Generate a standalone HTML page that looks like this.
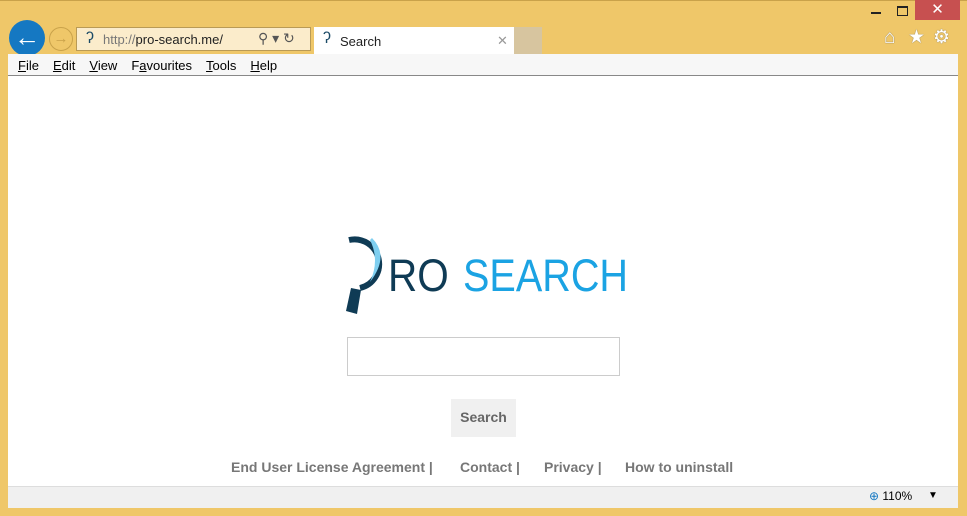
<!DOCTYPE html>
<html><head><style>
body{margin:0;width:967px;height:516px;background:#efc769;position:relative;overflow:hidden;font-family:"Liberation Sans",sans-serif}
.a{position:absolute}
.menu span{margin-right:14px}
.menu u{text-decoration:underline}
.lk{position:absolute;top:459px;font-size:14px;font-weight:bold;color:#777;white-space:pre}
</style></head><body>
<div class="a" style="left:0;top:0;width:967px;height:1px;background:#c9a24a"></div>
<div class="a" style="left:871px;top:12px;width:10px;height:2px;background:#222"></div>
<div class="a" style="left:897px;top:6px;width:9px;height:7px;border:1px solid #222;border-top-width:2px"></div>
<div class="a" style="left:915px;top:0;width:45px;height:20px;background:#c75050;color:#fff;font-size:15px;text-align:center;line-height:20px">✕</div>
<div class="a" style="left:884px;top:27px;font-size:19px;color:#fff;text-shadow:0 0 1px #555">⌂</div>
<div class="a" style="left:908px;top:26px;font-size:19px;color:#fff;text-shadow:0 0 1px #555">★</div>
<div class="a" style="left:933px;top:26px;font-size:19px;color:#fff;text-shadow:0 0 1px #555">⚙</div>
<div class="a" style="left:9px;top:20px;width:36px;height:36px;border-radius:50%;background:#1578c2;color:#fff;font-size:26px;font-weight:bold;text-align:center;line-height:34px">←</div>
<div class="a" style="left:49px;top:27px;width:22px;height:22px;border-radius:50%;border:1px solid #c9a24a;color:#c9a24a;font-size:15px;text-align:center;line-height:22px">→</div>
<div class="a" style="left:76px;top:27px;width:233px;height:22px;background:#fbeccb;border:1px solid #b99a55"></div>
<div class="a" style="left:86px;top:30px;font-size:16px;color:#1b4a66">ʔ</div>
<div class="a" style="left:103px;top:32px;font-size:13px;color:#777">http://<span style="color:#222">pro-search.me/</span></div>
<div class="a" style="left:258px;top:30px;font-size:14px;color:#555">⚲ ▾ ↻</div>
<div class="a" style="left:314px;top:27px;width:200px;height:27px;background:#fff"></div>
<div class="a" style="left:514px;top:27px;width:28px;height:27px;background:#d7c59f"></div>
<div class="a" style="left:323px;top:30px;font-size:16px;color:#1b4a66">ʔ</div>
<div class="a" style="left:340px;top:34px;font-size:13px;color:#222">Search</div>
<div class="a" style="left:497px;top:33px;font-size:13px;color:#999">✕</div>
<div class="a" style="left:8px;top:54px;width:950px;height:432px;background:#fff"></div>
<div class="a menu" style="left:8px;top:54px;width:950px;height:22px;background:#f7f7f7;border-bottom:1px solid #888;font-size:13px;color:#000;line-height:23px;padding-left:10px;box-sizing:border-box"><span><u>F</u>ile</span><span><u>E</u>dit</span><span><u>V</u>iew</span><span>F<u>a</u>vourites</span><span><u>T</u>ools</span><span><u>H</u>elp</span></div>
<svg class="a" style="left:340px;top:226px" width="60" height="92">
<path d="M9 14 A24 24 0 1 1 20 62" fill="none" stroke="#0f3b55" stroke-width="6"/>
<path d="M32 12 Q50 30 30 56 Q40 34 30 14 Z" fill="#7fcff0"/>
<path d="M11 62 L21 64 L17 88 L6 85 Z" fill="#0f3b55"/>
</svg>
<div class="a" style="left:388px;top:250px;font-size:45px;color:#0f3b55;letter-spacing:0;transform:scaleX(.9);transform-origin:left">RO</div>
<div class="a" style="left:463px;top:250px;font-size:45px;color:#1ba3e3;letter-spacing:0;transform:scaleX(.88);transform-origin:left">SEARCH</div>
<div class="a" style="left:347px;top:337px;width:271px;height:37px;border:1px solid #ccc"></div>
<div class="a" style="left:451px;top:399px;width:65px;height:38px;background:#f0f0f0;color:#666;font-weight:bold;font-size:14px;text-align:center;line-height:37px">Search</div>
<div class="lk" style="left:231px">End User License Agreement |</div>
<div class="lk" style="left:460px">Contact |</div>
<div class="lk" style="left:544px">Privacy |</div>
<div class="lk" style="left:625px">How to uninstall</div>
<div class="a" style="left:8px;top:486px;width:950px;height:21px;background:#f0f0f0;border-top:1px solid #ddd"></div>
<div class="a" style="left:869px;top:489px;font-size:12px;color:#000"><span style="color:#1578c2">⊕</span> 110%</div>
<div class="a" style="left:928px;top:490px;font-size:10px">▼</div>
</body></html>
